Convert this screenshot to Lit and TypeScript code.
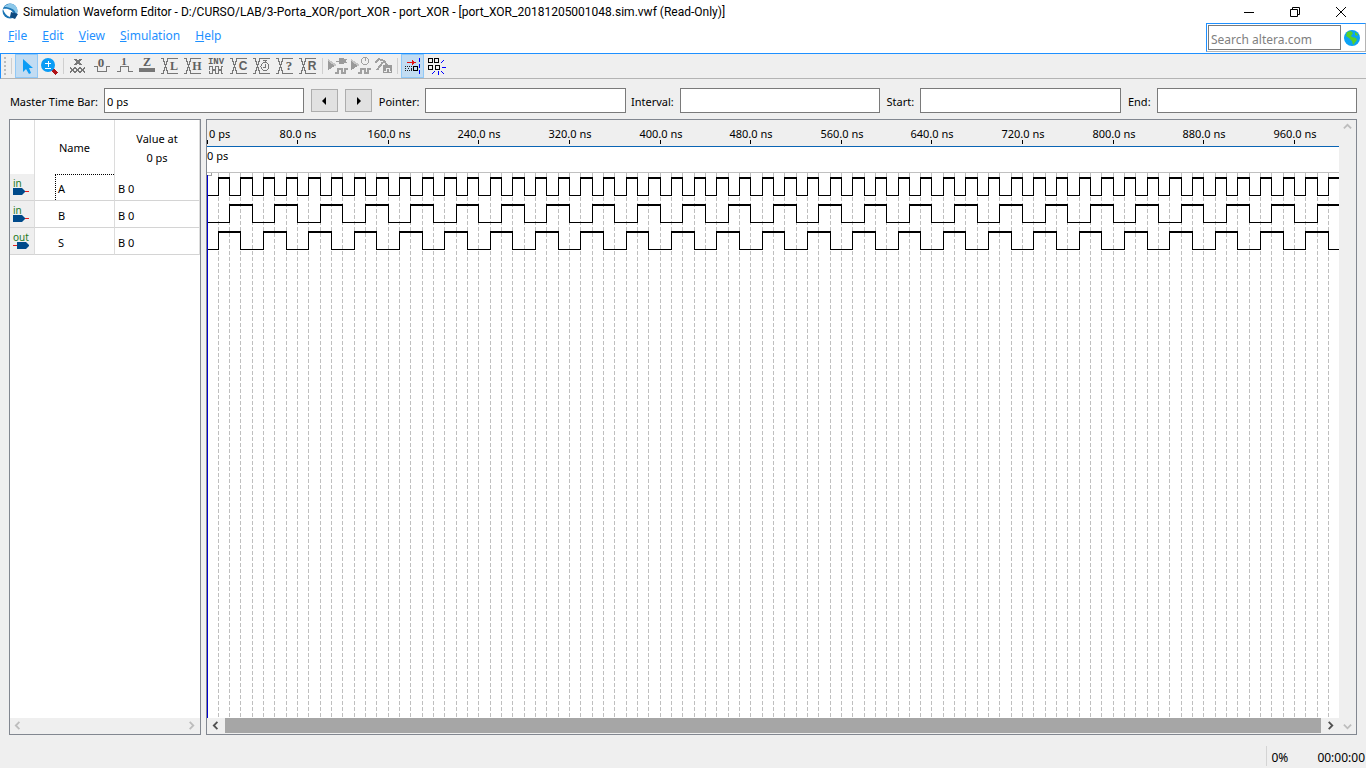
import { LitElement, html, svg, css } from "lit";
import { customElement, property } from "lit/decorators.js";

const STEP_NS = 10;
const PX_PER_NS = 1.1328;
const STEPS = 100;
const at = (ns: number) => Math.floor(ns * PX_PER_NS);

interface Signal {
  name: string;
  dir: "in" | "out";
  value: string;
  level: (step: number) => boolean;
}

const a = (i: number) => i % 2 === 1;
const b = (i: number) => i % 4 >= 2;
const signals: Signal[] = [
  { name: "A", dir: "in", value: "B 0", level: a },
  { name: "B", dir: "in", value: "B 0", level: b },
  { name: "S", dir: "out", value: "B 0", level: (i) => a(i) !== b(i) },
];

const crossed = svg`<path d="M2 4.5h2l5 15h10M2 19.500h2l5-15h10"/>`;
const letter = (t: string, x = 14, y = 16, size = 12, family = "serif") =>
  svg`<text class=${family} x=${x} y=${y} font-size=${size}>${t}</text>`;
const chip = svg`<path class="lt" d="M2 5l9 6-9 5z"/><path class="md" d="M2 7v9l7-4z"/><path class="ln" d="M9 18.500h3v-4h4v4h3v-4h3" stroke-width="2"/>`;

const tools: Record<string, unknown> = {
  pointer: svg`<path class="blue" d="M8 5v13l3-3 3 5 2-1-2-5h4z"/>`,
  zoom: svg`<path d="M14 15l5 5" stroke="#b01116" stroke-width="3"/><circle class="blue" cx="10" cy="11" r="7"/><path d="M7 9.500h6M10 6.500v6M7 14.500h6" stroke="#fff"/>`,
  unknown: svg`<path d="M7 5.500h3m2 0h3M7 10.500h3m2 0h3" /><path d="M8.500 5.500l5 5M13.500 5.500l-5 5" stroke-width="2"/><path d="M3 13.500l5 5M8 13.500l5 5M13 13.500l5 5M8 13.500l-5 5M13 13.500l-5 5M18 13.500l-5 5"/>`,
  low: svg`<path d="M4 12.500h3.500v5h9v-5h3"/>${letter("0", 11, 13, 13)}`,
  high: svg`<path d="M4 17.500h3.500v-5h8v5h4"/>${letter("1", 11, 11, 11)}`,
  highz: svg`<path class="fill" d="M3 14h16v4H3z"/>${letter("Z", 11, 12, 12)}`,
  weakLow: svg`${crossed}${letter("L", 15)}`,
  weakHigh: svg`${crossed}${letter("H", 15)}`,
  invert: svg`${letter("INV", 11, 10, 9, "mono")}<path d="M4 16v-3.500h3v3h3v-3h3v3h3v-3h2M4 17v2.500h3v-3h3v3h3v-3h3v3h2"/>`,
  count: svg`${crossed}${letter("C", 15, 16, 12, "sans")}`,
  clock: svg`${crossed}<circle class="bg" cx="14" cy="12.500" r="4"/><path d="M14 6v2M14 10v3h-2M12 6.500h4"/>`,
  arbitrary: svg`${crossed}${letter("?", 15, 16, 13)}`,
  random: svg`${crossed}${letter("R", 15, 16, 12, "sans")}`,
  functional: svg`${chip}<path class="md" d="M10 7h3V4h3c3 0 4 2 4 3s-1 3-4 3h-3V8h-3z"/><path class="ln" d="M17 5.500h4M17 8.500h4"/>`,
  timing: svg`${chip}<circle class="ln" cx="16" cy="7" r="3.500"/><path class="ln" d="M16 3v4"/>`,
  script: svg`<path class="ln" d="M5 16l6-8M3 9l4-4 5 2 3 4" stroke-width="2"/><path class="md" d="M11 11h9v8h-9z"/><path d="M12 17.500h2v-3h3v3h2" stroke="#eee"/>`,
  snapGrid: svg`<path d="M6 8.500h7" stroke="#e01010"/><path d="M11 6l4 2.500-4 2.500z" fill="#e01010" stroke="none"/><path d="M4 12.500h8M4 16.500h8" stroke="#222" stroke-dasharray="1 1"/><path d="M4.500 14v1M7.500 14v1M10.500 14v2" stroke="#222" /><path d="M12.500 12.500h4v4h-4z" stroke="#000"/><path d="M18.500 4v16" stroke="#00f" stroke-dasharray="4 2"/>`,
  snapEdge: svg`<path d="M4.500 4.500h4v4h-4zM10.500 4.500h4v4h-4zM4.500 11.500h4v4h-4zM11.500 11.500h4v4h-4z" stroke="#000"/><path d="M17 9l3-3M18 13.500h4M17 17l3 3M14.500 17v4M11 17l-3 3" stroke="#00f"/>`,
};

const toolGroups: [string, string][][] = [
  [["pointer", "Selection tool"], ["zoom", "Zoom tool"]],
  [
    ["unknown", "Forcing unknown"], ["low", "Forcing low"], ["high", "Forcing high"],
    ["highz", "High impedance"], ["weakLow", "Weak low"], ["weakHigh", "Weak high"],
    ["invert", "Invert"], ["count", "Count value"], ["clock", "Overwrite clock"],
    ["arbitrary", "Arbitrary value"], ["random", "Random values"],
  ],
  [["functional", "Run functional simulation"], ["timing", "Run timing simulation"], ["script", "Generate testbench"]],
  [["snapGrid", "Snap to grid"], ["snapEdge", "Snap to transition"]],
];
const pressed = new Set(["pointer", "snapGrid"]);

const base = css`
  * { box-sizing: border-box; }
  button, input { font: inherit; color: inherit; margin: 0; border-radius: 0; }
  button { padding: 0; border: 0; background: none; }
  input { min-width: 0; outline: 0; }
  svg { display: block; }
`;

@customElement("title-bar")
class TitleBar extends LitElement {
  static styles = [base, css`
    :host { display: flex; align-items: center; height: 23px; padding-right: 2px; background: #fff; font: 12px/16px Roboto, sans-serif; }
    .logo { margin: 0 4px 0 2px; }
    .title { flex: 1; margin: 0; font: inherit; white-space: nowrap; overflow: hidden; color: #000; }
    .win { width: 46px; height: 20px; display: grid; place-items: center; }
    .win svg { fill: none; stroke: #000; }
  `];
  render() {
    return html`
      <svg class="logo" width="17" height="17" viewBox="0 0 17 17">
        <circle cx="8" cy="8" r="7.500" fill="#1b75b5"/>
        <path d="M2 4C5 0 12-1 15 5c1 3 0 5-1 6-1-5-6-7-12-7z" fill="#8cc8ea"/>
        <path d="M1 6c5-1 10 1 11 6l-4 2C5 13 2 10 1 6z" fill="#fff"/>
        <path d="M9 9l7 2-3 5-5-2z" fill="#0e4a80"/>
      </svg>
      <h1 class="title">Simulation Waveform Editor - D:/CURSO/LAB/3-Porta_XOR/port_XOR - port_XOR - [port_XOR_20181205001048.sim.vwf (Read-Only)]</h1>
      <button class="win" aria-label="Minimize"><svg width="12" height="12"><path d="M1 6.500h10"/></svg></button>
      <button class="win" aria-label="Restore"><svg width="12" height="12"><path d="M1.500 3.500h7v7h-7zM3.500 3.500v-2h7v7h-2"/></svg></button>
      <button class="win" aria-label="Close"><svg width="12" height="12"><path d="M1 1l10 10M11 1L1 11"/></svg></button>
    `;
  }
}

@customElement("menu-bar")
class MenuBar extends LitElement {
  static styles = [base, css`
    :host { display: flex; justify-content: space-between; height: 30px; background: #fff; font: 12px/16px "Noto Sans", sans-serif; }
    .menu { display: flex; align-items: flex-start; gap: 15px; padding: 5px 8px; }
    .item { color: #1e90ff; }
    .search { display: flex; align-items: center; gap: 3px; height: 29px; padding: 0 5px 0 1px; border: 1px solid #b4b4b4; border-top-color: #1e90ff; border-left-color: #1e90ff; }
    .box { width: 133px; height: 25px; padding: 3px 2px 0; border: 1px solid #7a7a7a; }
    .box::placeholder { color: #808080; opacity: 1; }
  `];
  render() {
    return html`
      <nav class="menu">
        ${["File", "Edit", "View", "Simulation", "Help"].map(
          (m) => html`<button class="item"><u>${m[0]}</u>${m.slice(1)}</button>`
        )}
      </nav>
      <form class="search">
        <input class="box" type="text" placeholder="Search altera.com" aria-label="Search altera.com" />
        <button type="button" aria-label="Go">
          <svg width="16" height="16" viewBox="0 0 16 16">
            <circle cx="8" cy="8" r="8" fill="#0aa2f5"/>
            <path d="M3 2l4-1 2 2-2 3 1 1 4 1 1 2-3 4-1 1-1-4-3-3-3-2zM11 2l3 2-1 2-2-1z" fill="#55d02a"/>
          </svg>
        </button>
      </form>
    `;
  }
}

@customElement("tool-bar")
class ToolBar extends LitElement {
  static styles = [base, css`
    :host { display: flex; align-items: center; height: 26px; border-top: 1px solid #1e90ff; border-left: 1px solid #1e90ff; border-bottom: 1px solid #b4b4b4; padding-left: 3px; background: #efefef; }
    .grip { width: 2px; height: 18px; margin-right: 5px; background: repeating-linear-gradient(#bbb 0 2px, transparent 2px 4px); }
    .group { display: flex; border-left: 1px solid #cfcfcf; padding: 0 2px 0 3px; height: 16px; align-items: center; }
    .tool { width: 23px; height: 24px; }
    .on { background: #c2dcf2; outline: 1px solid #90c8f6; outline-offset: -1px; }
    .tool svg { fill: none; stroke: #777; shape-rendering: crispEdges; }
    text { fill: #606060; stroke: none; text-anchor: middle; font-weight: 700; }
    .serif { font-family: "Liberation Serif", serif; }
    .sans { font-family: "Liberation Sans", sans-serif; }
    .mono { font-family: "Liberation Mono", monospace; }
    .tool .blue { fill: #0a9cf5; stroke: none; shape-rendering: auto; }
    .fill { fill: #777; stroke: none; }
    .bg { fill: #efefef; }
    .md { fill: #9a9a9a; stroke: none; }
    .ln { stroke: #a0a0a0; }
    .lt { fill: #c4c4c4; stroke: none; }
  `];
  render() {
    return html`
      <span class="grip"></span>
      ${toolGroups.map((g) => html`<div class="group">
        ${g.map(([id, label]) => html`<button class="tool ${pressed.has(id) ? "on" : ""}" aria-label=${label}>
          <svg width="23" height="24" viewBox="0 0 23 24">${tools[id]}</svg>
        </button>`)}
      </div>`)}
    `;
  }
}

@customElement("time-bar")
class TimeBar extends LitElement {
  static styles = [base, css`
    :host {
      display: grid; align-items: center; padding: 9px 9px 6px;
      grid-template-columns: 95px 1fr 41px 27px 53px 1fr 54px 1fr 40px 1fr 36px 1fr;
    }
    label { padding: 2px 6px 0 0; text-align: right; white-space: nowrap; }
    input { height: 25px; width: 100%; padding: 2px 2px 0; border: 1px solid #7a7a7a; background: #fff; }
    .step { width: 27px; height: 23px; border: 1px solid #adadad; background: #e1e1e1; display: grid; place-items: center; }
    .prev { margin-left: 7px; }
  `];
  render() {
    const field = (id: string, text: string) => html`<label for=${id}>${text}</label><input id=${id} type="text" />`;
    return html`
      <label for="master">Master Time Bar:</label><input id="master" type="text" value="0 ps" />
      <button class="step prev" aria-label="Previous transition"><svg width="10" height="10"><path d="M6 1v8L2 5z"/></svg></button>
      <button class="step" aria-label="Next transition"><svg width="10" height="10"><path d="M3 1v8l4-4z"/></svg></button>
      ${field("pointer", "Pointer:")} ${field("interval", "Interval:")} ${field("start", "Start:")} ${field("end", "End:")}
    `;
  }
}

@customElement("scroll-strip")
class ScrollStrip extends LitElement {
  @property({ type: Boolean }) vertical = false;
  @property({ type: Boolean }) thumb = false;
  static styles = [base, css`
    :host { display: flex; height: 16px; background: #efefef; }
    :host([vertical]) { flex-direction: column; height: auto; width: 17px; }
    .end { width: 17px; height: 15px; display: grid; place-items: center; }
    .active { width: 18px; }
    .track { flex: 1; }
    .thumb { background: #a6a6a6; height: 15px; }
    svg { fill: none; stroke: #bdbdbd; stroke-width: 2; }
    .active svg { stroke: #505050; }
  `];
  render() {
    const paths = this.vertical ? ["M1 6l4-4 4 4", "M1 3l4 4 4-4"] : ["M6 1L2 5l4 4", "M3 1l4 4-4 4"];
    const end = (d: string, label: string) => html`<button class="end ${this.thumb ? "active" : ""}" aria-label=${label}>
      <svg width="9" height="9" viewBox="0 0 10 10"><path d=${d}/></svg></button>`;
    return html`${end(paths[0], "Scroll back")}<div class="track ${this.thumb ? "thumb" : ""}"></div>${end(paths[1], "Scroll forward")}`;
  }
}

@customElement("signal-list")
class SignalList extends LitElement {
  static styles = [base, css`
    :host { display: flex; flex-direction: column; justify-content: space-between; background: #fff; border: 1px solid #828790; }
    table { border-collapse: separate; border-spacing: 0; table-layout: fixed; width: 100%; }
    .c-pin { width: 25px; }
    .c-name { width: 80px; }
    th, td { padding: 0; font-weight: 400; border-right: 1px solid #dcdcdc; }
    th { height: 54px; line-height: 19px; padding-top: 1px; }
    td { height: 27px; border-bottom: 1px solid #d4d4d4; padding: 3px 0 0 3px; }
    .pin { background: #efefef; padding: 0; }
    .name { padding: 0 0 0 20px; }
    .label { display: block; height: 26px; padding: 6px 0 0 2px; border: 1px dotted transparent; border-width: 1px 0 0 1px; }
    .current { border-color: #000; }
    text { font: 10px "Noto Sans", sans-serif; fill: #1f7a1f; }
  `];
  render() {
    return html`
      <table>
        <colgroup><col class="c-pin" /><col class="c-name" /><col /></colgroup>
        <thead><tr><th></th><th>Name</th><th>Value at<br />0 ps</th></tr></thead>
        <tbody>
          ${signals.map((s, i) => html`<tr>
            <td class="pin"><svg width="24" height="26" viewBox="0 0 24 26">
              <text x="3" y="13">${s.dir}</text>
              ${s.dir === "in"
                ? svg`<path d="M14 17.500h5" stroke="#e02020"/><path d="M3 14h9l3 3v1l-3 3H3z" fill="#004a8a"/>`
                : svg`<path d="M3 17.500h5" stroke="#e02020"/><path d="M7 14h9l3 3v1l-3 3H7z" fill="#004a8a"/>`}
            </svg></td>
            <td class="name"><span class="label ${i === 0 ? "current" : ""}">${s.name}</span></td>
            <td>${s.value}</td>
          </tr>`)}
        </tbody>
      </table>
      <scroll-strip></scroll-strip>
    `;
  }
}

@customElement("wave-view")
class WaveView extends LitElement {
  static styles = [base, css`
    :host { display: grid; grid-template: 1fr / 1fr 17px; border: 1px solid #828790; background: #fff; min-width: 0; }
    .main { display: flex; flex-direction: column; min-width: 0; }
    .ruler { width: 100%; height: 27px; background: #efefef; border-bottom: 1px solid #0a64b4; }
    .bar { height: 26px; border-bottom: 1px solid #c0c0c0; line-height: 18px; display: flex; }
    .canvas { flex: 1; min-height: 0; display: grid; grid-template: 100% / 100%; }
    .plot { width: 100%; height: 100%; shape-rendering: crispEdges; fill: none; stroke: #000; }
    .ruler text { font: 11px "Noto Sans", sans-serif; fill: #000; text-anchor: middle; }
    .ruler .zero { text-anchor: start; }
    .grid { stroke: #bfbfbf; stroke-dasharray: 4 2; }
    .cursor { stroke: #0000d0; }
    .handle { stroke: #a0a0a0; }
  `];
  private ticks() {
    const out = [];
    for (let ns = 0; ns <= STEPS * STEP_NS; ns += 80) {
      const x = at(ns);
      out.push(svg`<path d="M${x + 0.5} 20v4" stroke="#000"/>
        <text class=${ns ? "major" : "zero"} x=${ns ? x + 1 : 2} y="18">${ns ? `${ns}.0 ns` : "0 ps"}</text>`);
    }
    return out;
  }
  private wave(s: Signal, row: number) {
    const hi = 5 + row * 27, lo = 22 + row * 27;
    const edges = [];
    const tops = [];
    for (let i = 0; i < STEPS; i++) {
      const x = at(i * STEP_NS), next = at((i + 1) * STEP_NS);
      if (s.level(i)) tops.push(`M${x} ${hi}H${next + 1}`);
      else edges.push(`M${x} ${lo + 0.5}H${next + 1}`);
      if (i && s.level(i) !== s.level(i - 1)) edges.push(`M${x + 0.5} ${hi - 1}V${lo + 1}`);
    }
    return svg`<path d=${edges.join("")}/><path d=${tops.join("")} stroke-width="2"/>`;
  }
  render() {
    const lines = Array.from({ length: STEPS }, (_, i) => `M${at((i + 1) * STEP_NS) + 0.5} 0V2000`).join("");
    return html`
      <div class="main">
        <svg class="ruler">${this.ticks()}</svg>
        <div class="bar">0 ps</div>
        <div class="canvas">
          <svg class="plot">
            <path class="grid" d=${lines}/>
            ${signals.map((s, i) => this.wave(s, i))}
            <path class="handle" d="M1 2.500h3.500V0"/>
            <path class="cursor" d="M0.500 2V2000"/>
          </svg>
        </div>
        <scroll-strip thumb></scroll-strip>
      </div>
      <scroll-strip vertical></scroll-strip>
    `;
  }
}

@customElement("app-root")
class AppRoot extends LitElement {
  static styles = [base, css`
    :host { display: flex; flex-direction: column; height: 100vh; background: #efefef; color: #000; font: 11px/16px "Noto Sans", sans-serif; overflow: hidden; }
    .work { flex: 1; min-height: 0; display: grid; grid-template: 1fr / 192px 1fr; gap: 5px; padding: 0 9px; }
    .status { display: flex; justify-content: flex-end; padding: 11px 0 2px; font-size: 12px; }
    .cell { padding: 4px 0 0 4px; white-space: nowrap; }
    .percent { border-left: 1px solid #d4d4d4; width: 50px; }
    .elapsed { padding: 4px 1px 0; }
  `];
  render() {
    return html`
      <title-bar></title-bar>
      <menu-bar></menu-bar>
      <tool-bar></tool-bar>
      <time-bar></time-bar>
      <main class="work"><signal-list></signal-list><wave-view></wave-view></main>
      <footer class="status"><span class="cell percent">0%</span><span class="cell elapsed">00:00:00</span></footer>
    `;
  }
}
